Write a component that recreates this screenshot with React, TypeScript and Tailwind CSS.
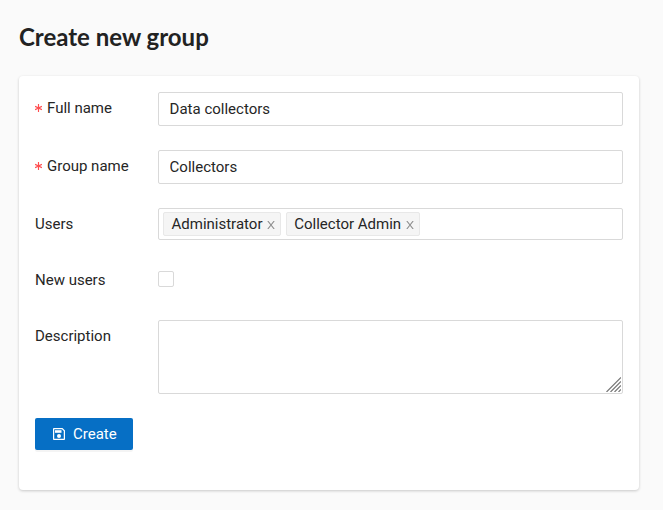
import React from 'react';

function Row({ label, required, children, className = '' }: {
  label: string;
  required?: boolean;
  children: React.ReactNode;
  className?: string;
}) {
  return (
    <div className={`mb-6 flex items-start ${className}`}>
      <label className="flex h-8 w-[123px] shrink-0 items-center whitespace-nowrap">
        {required && (
          <svg className="mr-[5px]" width="7" height="8" viewBox="0 0 7 8" stroke="#ff4d4f" strokeWidth="1.15" fill="none">
            <path d="M3.5 0v8M.1 2.3l6.8 3.4M6.9 2.3L.1 5.7" />
          </svg>
        )}
        {label}
      </label>
      {children}
    </div>
  );
}

function Tag({ children }: { children: string }) {
  return (
    <span className="flex h-6 items-center rounded-[2px] border border-[#e8e8e8] bg-[#f5f5f5] pr-[5.2px] pl-[7.49px]">
      {children}
      <svg className="mt-[2px] ml-[4.8px]" width="8" height="8" viewBox="0 0 8 8" stroke="#8c8c8c" strokeWidth="1.1" fill="none">
        <path d="M.8 0L7.2 8M7.2 0L.8 8" />
      </svg>
    </span>
  );
}

const field = 'min-w-0 flex-1 rounded-[2px] border border-[#d9d9d9] bg-white outline-none';

export default function App() {
  return (
    <div className="h-[510px] w-[663px] overflow-hidden bg-[#fafafa] px-[19px] pt-[18px] font-['Roboto',sans-serif] text-[15px] leading-[22px] text-[#262626]">
      <h1 className="mb-5 font-['Lato',sans-serif] text-[24px] leading-[38px] font-bold text-[#222]">
        Create new group
      </h1>
      <form className="h-[414px] w-[620px] rounded-[4px] bg-white p-4 shadow-[0_1px_3px_rgba(0,0,0,0.2)]">
        <Row label="Full name" required>
          <input className={`${field} h-[34px] px-[10.6px]`} defaultValue="Data collectors" />
        </Row>
        <Row label="Group name" required>
          <input className={`${field} h-[34px] px-[10.6px]`} defaultValue="Collectors" />
        </Row>
        <Row label="Users">
          <div className={`${field} flex h-8 items-center gap-[4.3px] px-1`}>
            <Tag>Administrator</Tag>
            <Tag>Collector Admin</Tag>
          </div>
        </Row>
        <Row label="New users">
          <input type="checkbox" className="mt-[7px] h-4 w-4 appearance-none rounded-[2px] border border-[#d9d9d9] bg-white" />
        </Row>
        <Row label="Description">
          <div className="relative flex h-[74px] flex-1">
            <textarea className={`${field} resize-none px-[11px] py-1`} />
            <svg className="pointer-events-none absolute right-[2px] bottom-[2px]" width="15" height="15" viewBox="0 0 15 15" stroke="#777" strokeWidth="1.2" fill="none">
              <path d="M.5 15L15 .5M4.5 15L15 4.5M8.5 15L15 8.5M12.5 15L15 12.5" />
            </svg>
          </div>
        </Row>
        <button
          type="button"
          className="flex h-8 w-[98px] items-center rounded-[2px] bg-[#066fc5] pl-[18px] text-white shadow-[0_2px_0_rgba(0,0,0,0.045)]"
        >
          <svg width="12" height="12" viewBox="0 0 12 12" fill="none" stroke="white">
            <path d="M.6 1.2q0-.6.6-.6H9.2L11.4 2.8V10.8q0 .6-.6.6H1.2q-.6 0-.6-.6Z" strokeWidth="1.25" />
            <path d="M2 3.5H8.5" strokeWidth="2.6" />
            <circle cx="6" cy="8" r="2" fill="white" stroke="none" />
          </svg>
          <span className="ml-2">Create</span>
        </button>
      </form>
    </div>
  );
}
